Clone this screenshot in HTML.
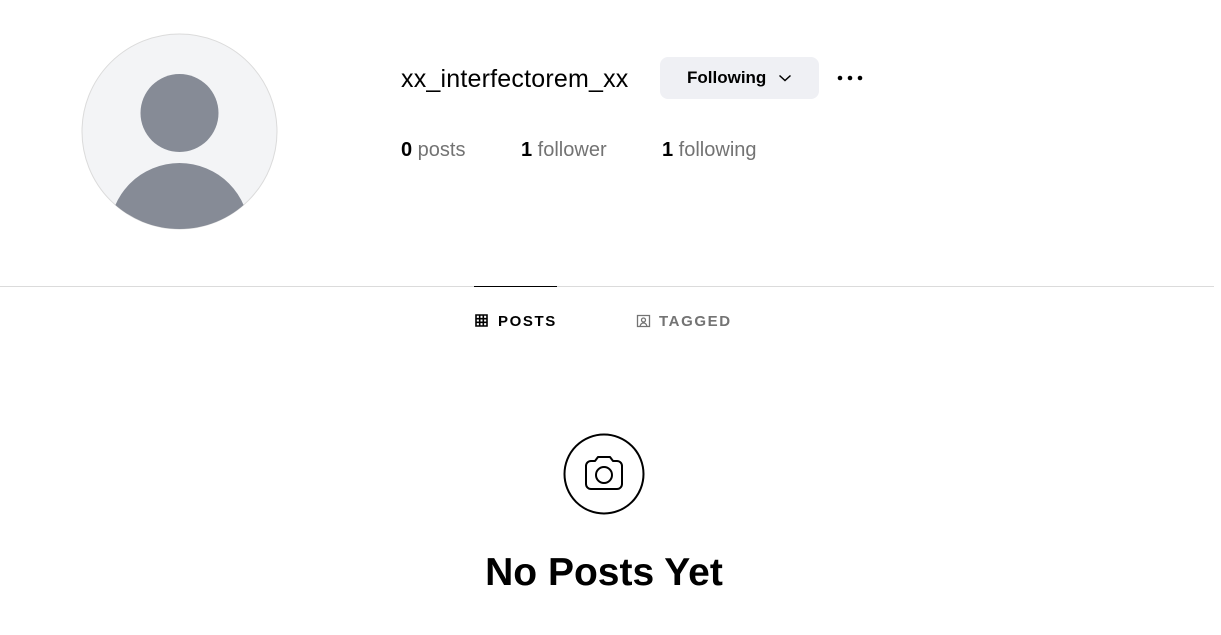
<!DOCTYPE html>
<html><head><style>
body{margin:0;width:1221px;height:635px;background:#fff;font-family:"Liberation Sans",Arial,sans-serif;position:relative;overflow:hidden}
.a{position:absolute}
</style></head><body>
<svg class="a" style="left:81px;top:33px" width="197" height="197" viewBox="0 0 197 197">
<defs><clipPath id="c"><circle cx="98.5" cy="98.5" r="97.5"/></clipPath></defs>
<circle cx="98.5" cy="98.5" r="97.5" fill="#f3f4f6" stroke="#dbdbdb" stroke-width="1"/>
<g clip-path="url(#c)" fill="#868b96">
<circle cx="98.5" cy="80" r="39"/>
<ellipse cx="98.5" cy="200" rx="70" ry="70"/>
</g>
</svg>
<div class="a" style="left:401px;top:65px;font-size:25px;color:#000;letter-spacing:0.2px">xx_interfectorem_xx</div>
<div class="a" style="left:660px;top:57px;width:159px;height:42px;background:#eff0f4;border-radius:8px;font-size:17px;font-weight:bold;line-height:42px;color:#000"><span style="position:absolute;left:27px">Following</span>
<svg class="a" style="left:118px;top:16px" width="14" height="10" viewBox="0 0 14 10"><path d="M1.5 2.5 L7 7.5 L12.5 2.5" fill="none" stroke="#000" stroke-width="1.5"/></svg></div>
<svg class="a" style="left:836px;top:74px" width="30" height="8"><circle cx="4" cy="4" r="2.3"/><circle cx="14" cy="4" r="2.3"/><circle cx="24" cy="4" r="2.3"/></svg>
<div class="a" style="left:401px;top:139px;font-size:20px;color:#737373"><b style="color:#000">0</b> posts</div>
<div class="a" style="left:521px;top:139px;font-size:20px;color:#737373"><b style="color:#000">1</b> follower</div>
<div class="a" style="left:662px;top:139px;font-size:20px;color:#737373"><b style="color:#000">1</b> following</div>
<div class="a" style="left:0;top:286px;width:1214px;height:1px;background:#dbdbdb"></div>
<div class="a" style="left:474px;top:286px;width:83px;height:1px;background:#000"></div>
<svg class="a" style="left:475px;top:314px" width="13" height="13" viewBox="0 0 13 13"><path d="M1 1h11v11H1zM4.7 1v11M8.3 1v11M1 4.7h11M1 8.3h11" fill="none" stroke="#000" stroke-width="1.6"/></svg>
<div class="a" style="left:498px;top:313px;font-size:15px;font-weight:bold;letter-spacing:1.6px;color:#000">POSTS</div>
<svg class="a" style="left:636px;top:313px" width="15" height="15" viewBox="0 0 15 15"><path d="M1.5 2.5h12v11h-12z" fill="none" stroke="#737373" stroke-width="1.3"/><circle cx="7.5" cy="7" r="2" fill="none" stroke="#737373" stroke-width="1.3"/><path d="M4 13.5c.5-2.5 2-3.5 3.5-3.5s3 1 3.5 3.5" fill="none" stroke="#737373" stroke-width="1.3"/></svg>
<div class="a" style="left:659px;top:313px;font-size:15px;font-weight:bold;letter-spacing:1.6px;color:#737373">TAGGED</div>
<svg class="a" style="left:563px;top:433px" width="82" height="82" viewBox="0 0 82 82"><circle cx="41" cy="41" r="39.5" fill="none" stroke="#000" stroke-width="2"/>
<path d="M23 33a5 5 0 0 1 5-5h4l3-4h12l3 4h4a5 5 0 0 1 5 5v18a5 5 0 0 1-5 5H28a5 5 0 0 1-5-5z" fill="none" stroke="#000" stroke-width="2" stroke-linejoin="round"/>
<circle cx="41" cy="42" r="8" fill="none" stroke="#000" stroke-width="2"/></svg>
<div class="a" style="left:0;width:1208px;text-align:center;top:551px;font-size:39px;font-weight:bold;color:#000">No Posts Yet</div>
</body></html>
